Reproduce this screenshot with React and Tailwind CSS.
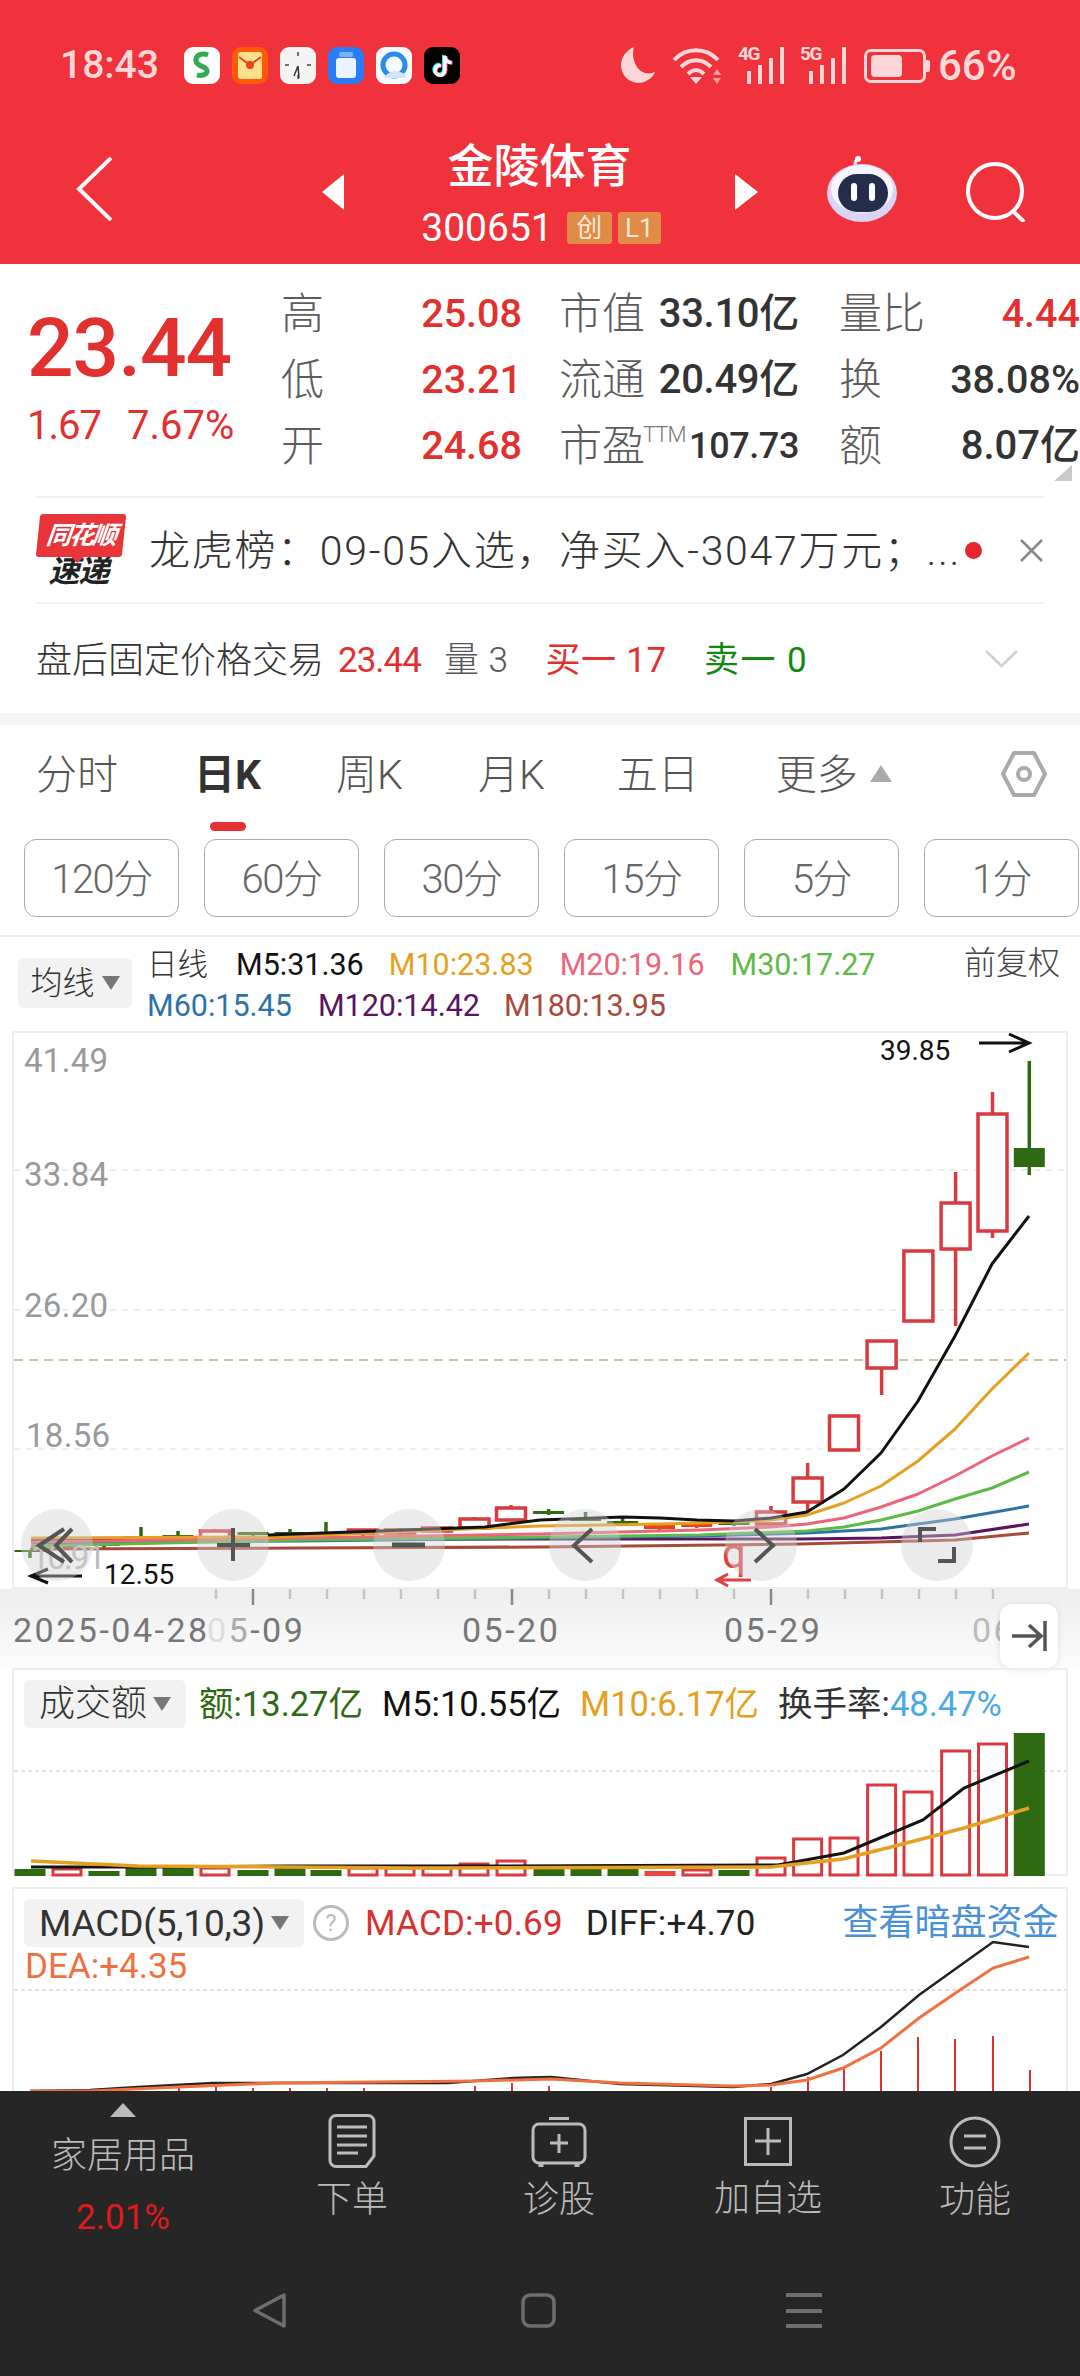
import React from 'react';
import { FaTiktok } from 'react-icons/fa6';

const R = '#d93a3f';
const G = '#2f6a13';
const O = '#e8431c';
const candles = [
  [30,1550,1551,1550,1558,G,1],[67,1545,1547,1541,1550,R,0],[104,1542,1545,1540,1548,G,1],
  [141,1536,1539,1527,1540,G,1],[178,1535,1537,1531,1541,G,1],[215,1531,1538,1529,1540,R,0],
  [253,1532,1534,1532,1540,G,1],[290,1532,1534,1529,1536,G,1],[326,1532,1534,1522,1534,G,1],
  [363,1530,1533,1529,1538,R,0],[400,1530,1533,1528,1535,R,0],[437,1528,1531,1527,1531,R,0],
  [474.5,1519,1528,1517,1530,R,0],[511,1508,1520,1505,1520,R,0],[548.6,1511,1513,1509,1515,G,1],
  [585.5,1518,1520,1512,1520,G,1],[622.6,1521,1523,1518,1526,G,1],[659.5,1525,1528,1523,1530,O,1],
  [696.7,1524,1526,1522,1528,O,1],[734,1522,1524,1520,1526,G,1],[771,1512,1524,1506,1524,R,0],
  [807.6,1478,1502,1463,1512,R,0],[844,1416,1450,1416,1450,R,0],[881.6,1341,1368,1341,1395,R,0],
  [918.4,1251,1321,1251,1321,R,0],[955.6,1203,1249,1172,1326,R,0],[992.5,1114,1231,1092,1238,R,0],
  [1029.3,1148,1166,1061,1175,G,1],
];
const maLines = [
  ['#a84a3a','30,1549 300,1548 540,1547 800,1544 955,1540 1029,1533'],
  ['#5a1460','31,1540 540,1539 800,1539 881,1538 955,1535 1029,1524'],
  ['#2d72a6','31,1543 300,1541 540,1538 700,1536 807,1533 881,1529 955,1519 1029,1506'],
  ['#5cbb45','31,1546 300,1540 540,1537 700,1535 807,1531 844,1527 881,1520 918,1511 955,1499 992,1488 1029,1472'],
  ['#ee6478','31,1542 300,1538 540,1534 700,1530 771,1527 807,1524 844,1518 881,1507 918,1494 955,1476 992,1456 1029,1438'],
  ['#e6a020','31,1538 275,1537 442,1530 540,1526 660,1524 734,1522 771,1520 807,1515 844,1503 881,1486 918,1461 955,1429 992,1389 1029,1353'],
  ['#111111','268,1535 379,1531 485,1527 540,1520 623,1517 660,1518 697,1520 734,1521 771,1518 807,1512 844,1489 881,1453 918,1401 955,1336 992,1264 1029,1216'],
];
const ticks = [216,253,290,327,364,401,438,475,512,549,586,623,660,697,734,771,808,845,882,919,956,993];
const tall = [253,512,771];
const volBars = [
  [30,1869,G],[67,1869,R],[104,1871,G],[141,1868,G],[178,1868,G],[215,1868,R],[253,1870,G],[290,1868,G],[326,1870,G],
  [363,1868,R],[400,1868,R],[437,1868,R],[474,1864,R],[511,1861,R],[549,1868,G],[586,1868,G],[623,1868,G],[660,1871,'#ee4444'],
  [697,1870,R],[734,1870,G],[771,1858,R],[807.6,1839,R],[844,1838,R],[881.6,1785,R],[918,1792,R],[955.6,1751,R],[992.5,1744,R],[1029.3,1733,G],
];
const macdBars = [[179,2087],[216,2085],[253,2088],[290,2088],[327,2088],[364,2088],[475,2086],[512,2083],[549,2086],[771,2087],[808,2077],[844,2067],[881,2051],[918,2037],[955,2039],[993,2036],[1030,2070]];

function AppIcons() {
  return (
    <div className="flex items-center gap-[12px] ml-[26px]">
      <svg width="36" height="37" viewBox="0 0 36 37"><rect width="36" height="37" rx="9" fill="#fff"/><path d="M24 8c-7-3-13 1-12 6 1 6 12 5 11 11-1 3-6 4-10 3" fill="none" stroke="#35a853" strokeWidth="5"/></svg>
      <svg width="36" height="37" viewBox="0 0 36 37"><rect width="36" height="37" rx="9" fill="#ff5a0a"/><rect x="6" y="5" width="24" height="27" rx="3" fill="#ffe08a"/><path d="M7 10l11 8 11-8" fill="none" stroke="#e8431c" strokeWidth="2"/><circle cx="18" cy="18" r="4" fill="#e8431c"/></svg>
      <svg width="36" height="37" viewBox="0 0 36 37"><rect width="36" height="37" rx="9" fill="#f4f4f4"/><path d="M18 5v4M18 28v4M5 18h4M27 18h4" stroke="#444" strokeWidth="1.5"/><path d="M18 19l-4 10M18 19l1 12" stroke="#333" strokeWidth="1.5"/></svg>
      <svg width="36" height="37" viewBox="0 0 36 37"><rect width="36" height="37" rx="9" fill="#2a7df5"/><rect x="11" y="5" width="14" height="5" rx="2" fill="#7cb4fb"/><rect x="8" y="11" width="20" height="20" rx="3" fill="#eaf3ff"/></svg>
      <svg width="36" height="37" viewBox="0 0 36 37"><rect width="36" height="37" rx="9" fill="#f6fbff"/><circle cx="18" cy="18" r="11" fill="none" stroke="#2a8cf0" strokeWidth="5"/><path d="M8 31c4-8 15-9 22-3v3z" fill="#cfe6fb"/></svg>
      <div className="relative flex h-[37px] w-[36px] items-center justify-center rounded-[9px] bg-black">
        <FaTiktok className="absolute left-[7px] top-[8px] text-[21px] text-[#25f4ee]" />
        <FaTiktok className="absolute left-[9px] top-[9px] text-[21px] text-[#fe2c55]" />
        <FaTiktok className="absolute left-[8px] top-[8.5px] text-[21px] text-white" />
      </div>
    </div>
  );
}

function Signal({ label }) {
  return (
    <div className="relative h-[37px] w-[47px]">
      <span className="absolute left-0 top-[-3px] text-[19px] font-bold leading-[20px] tracking-[-1.5px] text-[#fdd7d7]">{label}</span>
      <svg className="absolute inset-0" width="47" height="37" viewBox="0 0 47 37" fill="#fdd7d7">
        <rect x="9" y="24" width="4" height="13" /><rect x="20" y="18" width="4" height="19" /><rect x="31" y="11" width="4" height="26" /><rect x="42" y="0" width="4" height="37" />
      </svg>
    </div>
  );
}

function StatusBar() {
  return (
    <div className="flex h-[37px] items-center pl-[60px] mt-[47px]">
      <span className="w-[98px] text-[39px] font-medium leading-none text-[#fdd7d7]">18:43</span>
      <AppIcons />
      <svg className="ml-[159px]" width="36" height="37" viewBox="0 0 36 37"><path d="M15 0C4 5 0 15 3 24c3 9 13 14 22 11 5-2 9-5 11-10-7 3-14 1-18-5C14 14 13 6 15 0z" fill="#fdd7d7"/></svg>
      <svg className="ml-[17px]" width="50" height="37" viewBox="0 0 50 37" fill="none" stroke="#fdd7d7" strokeWidth="4"><path d="M2 13C14 0 34 0 46 13M9 20c9-9 21-9 30 0M16 27c5-5 11-5 16 0"/><path d="M24 37l-6-7h12z" fill="#fdd7d7" stroke="none"/><path d="M45 22l4 6h-8zM45 37l-4-6h8z" fill="#f9a0a0" stroke="none"/></svg>
      <div className="ml-[16px]"><Signal label="4G" /></div>
      <div className="ml-[15px]"><Signal label="5G" /></div>
      <div className="ml-[17px] relative flex h-[34px] w-[62px] items-center rounded-[7px] border-[3px] border-[#fdd7d7] pl-[4px]">
        <div className="h-[22px] w-[31px] rounded-[4px] bg-[#fdd7d7]" />
        <div className="absolute right-[-7px] top-[8px] h-[12px] w-[4px] rounded-r-[2px] bg-[#fdd7d7]" />
      </div>
      <span className="ml-[12px] text-[42px] font-medium leading-none text-[#fdd7d7]">66%</span>
    </div>
  );
}

function Robot() {
  return (
    <svg width="72" height="67" viewBox="0 0 72 67">
      <path d="M32 12c-3-3-2-8 1-9" fill="none" stroke="#efeafa" strokeWidth="3"/>
      <circle cx="33" cy="3" r="3" fill="#fff"/>
      <ellipse cx="37" cy="37" rx="35" ry="29" fill="#d9d4f6"/>
      <ellipse cx="37" cy="33" rx="31" ry="24" fill="#f6f5fd"/>
      <rect x="13" y="18" width="50" height="38" rx="19" fill="#262d4a"/>
      <rect x="26" y="27" width="6" height="18" rx="3" fill="#fff"/>
      <rect x="44" y="27" width="6" height="18" rx="3" fill="#fff"/>
    </svg>
  );
}

function NavRow() {
  return (
    <div className="mt-[59px] flex h-[107px] items-start pl-[76px]">
      <svg className="mt-[14px]" width="36" height="64" viewBox="0 0 36 64" fill="none" stroke="#fff" strokeWidth="4"><path d="M35 1L3 32l32 31"/></svg>
      <svg className="ml-[210px] mt-[31px]" width="22" height="36" viewBox="0 0 22 36" fill="#fff"><path d="M22 0v36L0 18z"/></svg>
      <div className="flex w-[391px] flex-col items-center">
        <span className="text-[46px] font-medium leading-[46px] text-white">金陵体育</span>
        <div className="mt-[23px] flex h-[32px] items-center pl-[3px]">
          <span className="text-[39px] leading-none text-white">300651</span>
          <span className="ml-[14px] flex h-[32px] w-[45px] items-center justify-center rounded-[3px] bg-[#e08c47] text-[26px] leading-none text-[#ffe9d6]">创</span>
          <span className="ml-[6px] flex h-[32px] w-[43px] items-center justify-center rounded-[3px] bg-[#e08c47] text-[26px] leading-none text-[#ffe9d6]">L1</span>
        </div>
      </div>
      <svg className="mt-[31px]" width="23" height="36" viewBox="0 0 23 36" fill="#fff"><path d="M0 0v36l23-18z"/></svg>
      <div className="ml-[67px] mt-[13px]"><Robot /></div>
      <svg className="ml-[69px] mt-[19px]" width="60" height="60" viewBox="0 0 60 60" fill="none" stroke="#fff" strokeWidth="4"><circle cx="29" cy="29" r="27"/><path d="M46 48l12 12"/></svg>
    </div>
  );
}

function Stat({ label, value, wide, vClass }) {
  return (
    <div className={wide}>
      {label}
      <span className={vClass}>{value}</span>
    </div>
  );
}

const midValue = 'whitespace-nowrap text-[40px] font-medium leading-[66px] tracking-[-0.3px] text-[#333]';

function QuoteRow({ a, av, b, bv, bClass, c, cv, cClass }) {
  const label = 'text-[43px] leading-[66px] font-light text-[#5c5c5c] whitespace-nowrap';
  return (
    <div className="flex h-[66px] items-center">
      <Stat wide="flex w-[241px] items-center justify-between" label={<span className={label}>{a}</span>} value={av} vClass="text-[39.5px] font-medium leading-[66px] text-[#e2302f]" />
      <Stat wide="ml-[37px] flex w-[240px] items-center justify-between" label={b} value={bv} vClass={bClass} />
      <Stat wide="ml-[40px] flex w-[241px] items-center justify-between" label={<span className={label}>{c}</span>} value={cv} vClass={cClass} />
    </div>
  );
}

function Quote() {
  const lab = 'text-[43px] leading-[66px] font-light text-[#5c5c5c] whitespace-nowrap';
  return (
    <section className="relative flex h-[232px] items-start">
      <div className="w-[281px] pl-[27px] pt-[42px]">
        <div className="text-[82px] font-medium leading-[84px] tracking-[-1px] text-[#e2302f]">23.44</div>
        <div className="mt-[16px] flex text-[40px] leading-[40px] text-[#e2302f]">
          <span className="tracking-[-1px]">1.67</span><span className="ml-[26px]">7.67%</span>
        </div>
      </div>
      <div className="mt-[17px]">
        <QuoteRow a="高" av="25.08" b={<span className={lab}>市值</span>} bv="33.10亿" bClass={midValue} c="量比" cv="4.44" cClass="text-[39.5px] font-medium leading-[66px] text-[#e2302f]" />
        <QuoteRow a="低" av="23.21" b={<span className={lab}>流通</span>} bv="20.49亿" bClass={midValue} c="换" cv="38.08%" cClass="text-[39.5px] font-medium leading-[66px] text-[#333]" />
        <QuoteRow a="开" av="24.68" b={<span className="flex shrink-0 items-start whitespace-nowrap"><span className={lab}>市盈</span><span className="ml-[-2px] mt-[9px] text-[22px] font-light leading-[26px] tracking-[-1px] text-[#777]">TTM</span></span>} bv="107.73" bClass="whitespace-nowrap text-[36px] font-medium leading-[66px] tracking-[-0.4px] text-[#333]" c="额" cv="8.07亿" cClass="text-[40px] font-medium leading-[66px] text-[#333]" />
      </div>
      <svg className="absolute left-[1054px] top-[201px]" width="18" height="16" viewBox="0 0 18 16" fill="#c9c9c9"><path d="M18 0v16H0z"/></svg>
    </section>
  );
}

function News() {
  return (
    <div className="mx-[36px] flex h-[108px] items-center border-y-2 border-[#f0f0f0]">
      <div className="ml-[2px] flex w-[86px] flex-col items-center">
        <div className="relative flex h-[43px] w-[86px] -skew-x-6 items-center justify-center rounded-[3px] bg-[#e8353a]">
          <span className="text-[25px] font-bold italic leading-none tracking-[-2px] text-white">同花顺</span>
          <div className="absolute bottom-[-6px] left-[36px] h-0 w-0 border-x-[6px] border-t-[6px] border-x-transparent border-t-[#e8353a]" />
        </div>
        <span className="mr-[5px] mt-[1px] text-[31px] font-bold italic leading-[28px] tracking-[-1px] text-[#222]">速递</span>
      </div>
      <span className="ml-[25px] w-[812px] whitespace-nowrap pt-[2px] text-[41px] font-light leading-none tracking-[1.7px] text-[#333]">龙虎榜：09-05入选，净买入-3047万元；...</span>
      <div className="ml-[4px] h-[17px] w-[17px] rounded-full bg-[#e6262c]" />
      <svg className="ml-[38px]" width="23" height="23" viewBox="0 0 23 23" fill="none" stroke="#888" strokeWidth="2.5"><path d="M1 1l21 21M22 1L1 22"/></svg>
    </div>
  );
}

function AfterHours() {
  return (
    <div className="flex h-[109px] items-center pl-[36px] pt-[4px] text-[35px] leading-none">
      <span className="text-[36px] font-light text-[#333]">盘后固定价格交易</span>
      <span className="ml-[14px] tracking-[-1px] text-[#e2302f]">23.44</span>
      <span className="ml-[23px] font-light tracking-[0.5px] text-[#555]">量 3</span>
      <span className="ml-[37px] tracking-[0.7px] text-[#e2302f]">买一 17</span>
      <span className="ml-[37px] tracking-[1.5px] text-[#118a11]">卖一 0</span>
      <svg className="ml-[177px] mt-[-4px]" width="33" height="18" viewBox="0 0 33 18" fill="none" stroke="#cfcfcf" strokeWidth="2.5"><path d="M1 1l15.5 15L32 1"/></svg>
    </div>
  );
}

function Tabs() {
  const t = 'text-[41px] font-light leading-none text-[#555] whitespace-nowrap';
  return (
    <div className="flex h-[114px] items-start pl-[36px] pt-[30px]">
      <span className={t}>分时</span>
      <div className="ml-[76px] flex flex-col items-center">
        <span className="text-[41px] font-bold leading-none text-[#333]">日K</span>
        <div className="mt-[26px] h-[9px] w-[36px] rounded-full bg-[#e63033]" />
      </div>
      <span className={`ml-[75px] ${t}`}>周K</span>
      <span className={`ml-[75px] ${t}`}>月K</span>
      <span className={`ml-[72px] ${t}`}>五日</span>
      <span className={`ml-[77px] ${t}`}>更多</span>
      <svg className="ml-[12px] mt-[10px]" width="22" height="17" viewBox="0 0 22 17" fill="#aaa"><path d="M11 0l11 17H0z"/></svg>
      <svg className="ml-[109px] mt-[-4px]" width="46" height="46" viewBox="0 0 46 46" fill="none" stroke="#aaa" strokeWidth="4"><path d="M13 2h20l11 21-11 21H13L2 23z" strokeLinejoin="round"/><circle cx="23" cy="23" r="6"/></svg>
    </div>
  );
}

function Periods() {
  const items = ['120分', '60分', '30分', '15分', '5分', '1分'];
  return (
    <div className="flex h-[98px] items-start gap-[25px] border-b-2 border-[#eee] pl-[24px]">
      {items.map((x) => (
        <div key={x} className="flex h-[78px] w-[155px] shrink-0 items-center justify-center rounded-[12px] border border-[#aaa] pt-[3px] text-[40px] font-light leading-none tracking-[-1.5px] text-[#666]">{x}</div>
      ))}
    </div>
  );
}

function Legend() {
  return (
    <div className="relative h-[94px]">
      <div className="absolute left-[18px] top-[21px] flex h-[50px] w-[114px] items-center justify-center rounded-[6px] bg-[#f2f2f2]">
        <span className="text-[32px] font-light leading-none text-[#333]">均线</span>
        <svg className="ml-[7px]" width="18" height="14" viewBox="0 0 18 14" fill="#777"><path d="M0 0h18L9 14z"/></svg>
      </div>
      <div className="absolute left-[147px] top-[6px] flex h-[44px] items-center whitespace-nowrap text-[30.5px] leading-none">
        <span className="font-light text-[#333]">日线</span>
        <span className="ml-[28px] text-[#111]">M5:31.36</span>
        <span className="ml-[25px] text-[#e6a020]">M10:23.83</span>
        <span className="ml-[26px] text-[#ee6478]">M20:19.16</span>
        <span className="ml-[26px] text-[#5cbb45]">M30:17.27</span>
      </div>
      <span className="absolute left-[964px] top-[10px] text-[32px] font-light leading-none text-[#444]">前复权</span>
      <div className="absolute left-[147px] top-[47px] flex h-[44px] items-center whitespace-nowrap text-[30.5px] leading-none">
        <span className="text-[#2d72a6]">M60:15.45</span>
        <span className="ml-[26px] text-[#5a1460]">M120:14.42</span>
        <span className="ml-[24px] text-[#a84a3a]">M180:13.95</span>
      </div>
    </div>
  );
}

function KChart() {
  const yl = 'absolute text-[33px] leading-[40px] tracking-[0.3px] text-[#999]';
  const dl = 'absolute text-[34px] leading-[40px] tracking-[2.5px] text-[#777]';
  const circle = [57, 233, 409, 585, 761, 937];
  return (
    <section className="relative h-[637px]">
      <div className="ml-[12px] h-[558px] w-[1056px] border-2 border-[#eeeeee]" />
      <div className="h-[79px] bg-gradient-to-b from-[#eeeeee] to-[#fcfcfc]" />
      <svg className="absolute left-0 top-0" width="1080" height="637" viewBox="0 1031 1080 637">
        {[1170, 1310, 1449].map((y) => (
          <line key={y} x1="14" x2="1066" y1={y} y2={y} stroke="#e8e8e8" strokeWidth="1.5" strokeDasharray="6 6" />
        ))}
        <line x1="14" x2="1066" y1="1360" y2="1360" stroke="#c8ad7f" strokeWidth="1.5" strokeDasharray="9 6" />
        {candles.map(([x, t, b, wt, wb, c, f]) => (
          <g key={x}>
            <line x1={x} x2={x} y1={wt} y2={wb} stroke={c} strokeWidth="3.5" />
            {f ? (
              <rect x={x - 15.5} y={t} width="31" height={b - t + 1} fill={c} />
            ) : (
              <rect x={x - 14.5} y={t} width="29" height={b - t} fill="#fff" stroke={c} strokeWidth="3.5" />
            )}
          </g>
        ))}
        {maLines.map(([c, p]) => (
          <polyline key={c} points={p} fill="none" stroke={c} strokeWidth="3" strokeLinejoin="round" />
        ))}
        {ticks.map((x) => (
          <line key={x} x1={x} x2={x} y1="1589" y2={tall.includes(x) ? 1605 : 1599} stroke={tall.includes(x) ? '#888' : '#c4c4c4'} strokeWidth="2.5" />
        ))}
        <path d="M979 1043h51M1009 1034l20 9-20 9" fill="none" stroke="#111" strokeWidth="3" />
        <path d="M30 1576h52M48 1569l-17 7 17 7" fill="none" stroke="#111" strokeWidth="3" />
        <path d="M716 1580h35M728 1574l-11 6 11 6" fill="none" stroke="#e04040" strokeWidth="3" />
      </svg>
      <span className={`${yl} left-[24px] top-[10px]`}>41.49</span>
      <span className={`${yl} left-[24px] top-[124px]`}>33.84</span>
      <span className={`${yl} left-[24px] top-[255px]`}>26.20</span>
      <span className={`${yl} left-[26px] top-[385px]`}>18.56</span>
      <span className="absolute left-[31px] top-[507px] text-[33px] leading-[40px] tracking-[-2px] text-[#bbb]">10.91</span>
      <span className="absolute left-[104px] top-[524px] text-[28px] leading-[40px] text-[#111]">12.55</span>
      <span className="absolute left-[880px] top-0 text-[28px] leading-[40px] text-[#111]">39.85</span>
      <span className="absolute left-[722px] top-[503px] text-[42px] leading-[40px] text-[#e04040]">q</span>
      <span className={`${dl} left-[13px] top-[579px]`}>2025-04-28</span>
      <span className={`${dl} left-[207px] top-[579px]`}><span className="text-[#ddd]">0</span><span className="text-[#aaa]">5</span>-09</span>
      <span className={`${dl} left-[462px] top-[579px]`}>05-20</span>
      <span className={`${dl} left-[724px] top-[579px]`}>05-29</span>
      <span className={`${dl} left-[972px] top-[579px] text-[#bbb]`}>06</span>
      <svg className="absolute left-0 top-0" width="1080" height="637" viewBox="0 1031 1080 637">
        {circle.map((x) => (
          <circle key={x} cx={x} cy="1545" r="36" fill="#cfcfcf" fillOpacity="0.42" />
        ))}
        <g fill="none" stroke="#555" strokeWidth="4">
          <path d="M64 1529l-25 16.5 25 16.5M72 1529l-16 16.5 16 16.5" />
          <path d="M233 1528v33M217 1545h33" />
          <path d="M392 1545h33" strokeWidth="5" />
          <path d="M592 1529l-18 16.5 18 16.5" />
          <path d="M755 1529l18 16.5-18 16.5" />
          <path d="M920 1542v-13h16M954 1547v14h-16" />
        </g>
      </svg>
      <div className="absolute left-[1000px] top-[573px] flex h-[64px] w-[58px] items-center justify-center rounded-[12px] bg-white shadow-[0_1px_6px_rgba(0,0,0,0.12)]">
        <svg width="36" height="32" viewBox="0 0 36 32" fill="none" stroke="#555" strokeWidth="3.5"><path d="M1 16h29M18 5l12 11-12 11M34 1v30"/></svg>
      </div>
    </section>
  );
}

function Volume() {
  return (
    <section className="relative h-[219px]">
      <div className="ml-[12px] h-[208px] w-[1056px] border-x-2 border-y-2 border-[#eeeeee] pl-[10px] pt-[10px]">
        <div className="flex h-[48px] items-center whitespace-nowrap text-[34.5px] leading-none">
          <div className="flex h-[48px] w-[162px] items-center justify-center rounded-[6px] bg-[#f2f2f2]">
            <span className="text-[36px] font-light text-[#333]">成交额</span>
            <svg className="ml-[6px]" width="18" height="14" viewBox="0 0 18 14" fill="#777"><path d="M0 0h18L9 14z"/></svg>
          </div>
          <span className="ml-[13px] text-[#2f6a13]">额:13.27亿</span>
          <span className="ml-[19px] text-[#111]">M5:10.55亿</span>
          <span className="ml-[19px] text-[#e6a020]">M10:6.17亿</span>
          <span className="ml-[19px] text-[#333]">换手率:</span>
          <span className="text-[#4aa8e8]">48.47%</span>
        </div>
      </div>
      <svg className="absolute left-0 top-0" width="1080" height="219" viewBox="0 1668 1080 219">
        <line x1="14" x2="1066" y1="1771" y2="1771" stroke="#d8d8d8" strokeWidth="1.5" strokeDasharray="4 3" />
        {volBars.map(([x, t, c]) =>
          c === R ? (
            <rect key={x} x={x - 14} y={t} width="28" height={1875 - t} fill="#fff" stroke={c} strokeWidth="3" />
          ) : (
            <rect key={x} x={x - 15.5} y={t} width="31" height={1876 - t} fill={c} />
          )
        )}
        <polyline points="31,1867 150,1867 290,1866 500,1866 778,1865 844,1853 923,1820 964,1788 1029,1761" fill="none" stroke="#111" strokeWidth="3" />
        <polyline points="31,1861 138,1866 413,1868 771,1867 843,1859 895,1846 964,1828 1029,1808" fill="none" stroke="#e6a020" strokeWidth="3.5" />
      </svg>
    </section>
  );
}

function Macd() {
  return (
    <section className="relative h-[204px] overflow-hidden">
      <div className="ml-[12px] h-[204px] w-[1056px] border-x-2 border-t-2 border-[#eeeeee] pt-[10px]">
        <div className="flex h-[48px] items-center whitespace-nowrap pl-[10px] text-[35px] leading-none">
          <div className="flex h-[48px] w-[280px] items-center justify-center rounded-[6px] bg-[#f2f2f2]">
            <span className="text-[37px] tracking-[-0.2px] text-[#333]">MACD(5,10,3)</span>
            <svg className="ml-[6px]" width="18" height="14" viewBox="0 0 18 14" fill="#777"><path d="M0 0h18L9 14z"/></svg>
          </div>
          <div className="ml-[9px] flex h-[36px] w-[36px] items-center justify-center rounded-full border-[3px] border-[#bbb] text-[24px] text-[#bbb]">?</div>
          <span className="ml-[16px] tracking-[0.2px] text-[#d93030]">MACD:+0.69</span>
          <span className="ml-[23px] tracking-[0.2px] text-[#222]">DIFF:+4.70</span>
          <span className="ml-[87px] text-[36px] text-[#4a90d9]">查看暗盘资金</span>
        </div>
        <div className="ml-[11px] mt-0 text-[35px] leading-[40px] text-[#f07040]">DEA:+4.35</div>
      </div>
      <svg className="absolute left-0 top-0" width="1080" height="204" viewBox="0 1887 1080 204">
        <line x1="14" x2="1066" y1="1990" y2="1990" stroke="#d8d8d8" strokeWidth="1.5" strokeDasharray="4 3" />
        {macdBars.map(([x, t]) => (
          <line key={x} x1={x} x2={x} y1={t} y2="2091" stroke="#d93030" strokeWidth="2" />
        ))}
        <polyline points="30,2091 90,2090 138,2087 213,2083 448,2083 513,2078 551,2077 620,2084 733,2087 771,2084 807,2074 843,2055 881,2027 919,1995 993,1942 1029,1947" fill="none" stroke="#222" strokeWidth="2.5" />
        <polyline points="30,2091 90,2091 179,2087 275,2083 475,2081 551,2079 620,2083 733,2086 771,2085 807,2080 843,2068 881,2048 919,2018 957,1992 993,1968 1029,1957" fill="none" stroke="#f07040" strokeWidth="3" />
      </svg>
    </section>
  );
}

function Footer() {
  const t = 'text-[36px] font-light leading-none text-[#bbb] whitespace-nowrap';
  return (
    <footer className="h-[285px] bg-[#262626]">
      <div className="flex h-[202px]">
        <div className="flex w-[246px] flex-col items-center pt-[12px]">
          <svg width="26" height="14" viewBox="0 0 26 14" fill="#bbb"><path d="M13 0l13 14H0z"/></svg>
          <span className={`mt-[21px] ${t}`}>家居用品</span>
          <span className="mt-[26px] text-[35px] leading-none text-[#e01a1a]">2.01%</span>
        </div>
        <div className="flex w-[212px] flex-col items-center pt-[23px]">
          <svg width="48" height="54" viewBox="0 0 48 54" fill="none" stroke="#bbb" strokeWidth="3"><path d="M8 1.5h32a6 6 0 0 1 6 6V42l-8 10.5H8a6 6 0 0 1-6-6v-39a6 6 0 0 1 6-6z"/><path d="M9 13h30M9 22h30M9 31h30M9 39h21"/></svg>
          <span className={`mt-[14px] ${t}`}>下单</span>
        </div>
        <div className="flex w-[202px] flex-col items-center pt-[26px]">
          <svg width="56" height="51" viewBox="0 0 56 51" fill="none" stroke="#bbb" strokeWidth="3"><path d="M18 1.5h20"/><rect x="2" y="7" width="52" height="39" rx="6"/><path d="M28 17v19M19 26h18"/><path d="M10 46v4M46 46v4" strokeWidth="5"/></svg>
          <span className={`mt-[14px] ${t}`}>诊股</span>
        </div>
        <div className="flex w-[216px] flex-col items-center pt-[26px]">
          <svg width="48" height="49" viewBox="0 0 48 49" fill="none" stroke="#bbb" strokeWidth="3"><rect x="1.5" y="1.5" width="45" height="46"/><path d="M24 11v27M11 24h26"/></svg>
          <span className={`mt-[15px] ${t}`}>加自选</span>
        </div>
        <div className="flex w-[198px] flex-col items-center pt-[25px]">
          <svg width="52" height="52" viewBox="0 0 52 52" fill="none" stroke="#bbb" strokeWidth="3"><circle cx="26" cy="26" r="24"/><path d="M15 20h22M15 32h22"/></svg>
          <span className={`mt-[14px] ${t}`}>功能</span>
        </div>
      </div>
      <div className="flex items-start pl-[253px]">
        <svg width="34" height="35" viewBox="0 0 34 35" fill="none" stroke="#6e6e6e" strokeWidth="3.5"><path d="M31 2v31L2 17.5z" strokeLinejoin="round"/></svg>
        <svg className="ml-[234px]" width="35" height="35" viewBox="0 0 35 35" fill="none" stroke="#6e6e6e" strokeWidth="3.5"><rect x="2" y="2" width="31" height="31" rx="7"/></svg>
        <svg className="ml-[230px]" width="36" height="35" viewBox="0 0 36 35" fill="#6e6e6e"><rect y="0" width="36" height="4"/><rect y="16" width="36" height="4"/><rect y="31" width="36" height="4"/></svg>
      </div>
    </footer>
  );
}

export default function App() {
  return (
    <div className="h-[2376px] w-[1080px] overflow-hidden bg-white font-[Roboto,'Noto_Sans_CJK_SC',sans-serif]">
      <header className="h-[264px] overflow-hidden bg-[#f0323c]">
        <StatusBar />
        <NavRow />
      </header>
      <Quote />
      <News />
      <AfterHours />
      <div className="h-[12px] bg-[#f5f5f5]" />
      <Tabs />
      <Periods />
      <Legend />
      <KChart />
      <Volume />
      <Macd />
      <Footer />
    </div>
  );
}
